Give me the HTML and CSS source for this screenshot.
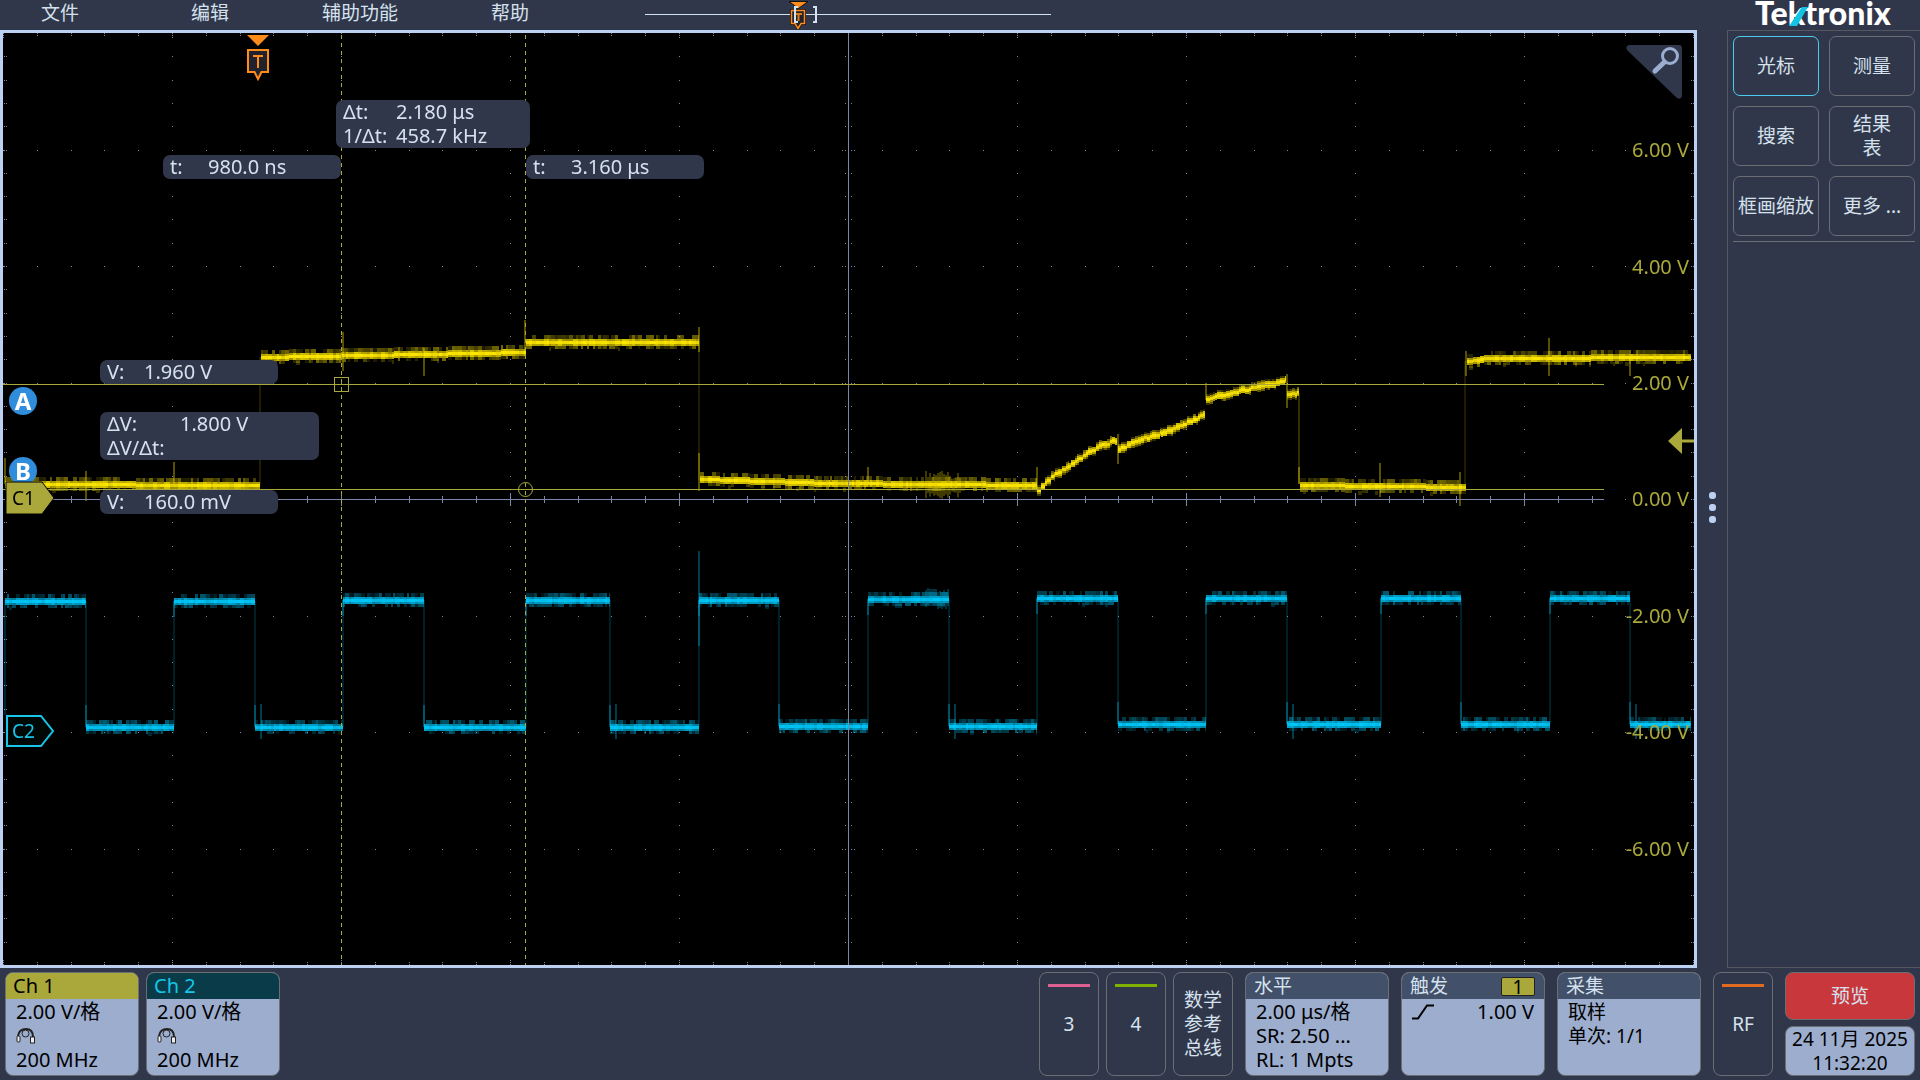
FILE: index.html
```
<!DOCTYPE html>
<html lang="zh-CN">
<head>
    <meta charset="UTF-8">
    <meta name="viewport" content="width=device-width, initial-scale=1.0">
    <title>Tektronix</title>
    <link rel="stylesheet" href="styles.css">
</head>
<body>
    <header class="topbar">
        <nav class="menu">
            <button>文件</button>
            <button>编辑</button>
            <button>辅助功能</button>
            <button>帮助</button>
        </nav>
        <svg class="overview" width="408" height="30" viewBox="644 0 408 30">
            <path d="M645 14.5H1051" stroke="#cfe3f2"/>
            <path d="M789 1.500h19l-9.500 7z" fill="#ff8c1a" stroke="#111"/>
            <path d="M791.500 10.500h13v13h-3.500l-3 5-3-5h-3.500z" fill="#22222e" stroke="#111" stroke-width="3"/>
            <path d="M791.500 10.500h13v13h-3.500l-3 5-3-5h-3.500z" fill="#22222e" stroke="#ff8c1a" stroke-width="1.500"/>
            <path d="M795 14h7M798.500 14v7" stroke="#d97a1c" stroke-width="2"/>
            <path d="M798 7h-3v15h3M813 7h3v15h-3" fill="none" stroke="#cfe3f2" stroke-width="2"/>
        </svg>
        <div class="logo">
            <svg width="144" height="30" viewBox="0 0 144 30">
                <text class="logo-text" x="4" y="25">Tektronix</text>
                <path d="M38 26l13-19h6l-11 19z" fill="#12c4e4"/>
            </svg>
        </div>
    </header>

    <main class="plot">
        <canvas id="screen" class="screen" width="1691" height="932"></canvas>

        <svg class="trigger-pos" width="24" height="48" viewBox="0 0 24 48">
            <path d="M1 1h22l-11 11z" fill="#ff8c1a"/>
            <path d="M2 16h20v22h-6.500l-3.500 7-3.500-7h-6.500z" fill="#22222e" stroke="#ff8c1a" stroke-width="2"/>
            <path d="M7 22h10M12 22v12" stroke="#ff8c1a" stroke-width="2"/>
        </svg>

        <div class="readout delta-t">
            <span>Δt:</span><span>2.180 μs</span>
            <span>1/Δt:</span><span>458.7 kHz</span>
        </div>
        <div class="readout time-a"><span>t:</span><span>980.0 ns</span></div>
        <div class="readout time-b"><span>t:</span><span>3.160 μs</span></div>
        <div class="readout volt-a"><span>V:</span><span>1.960 V</span></div>
        <div class="readout delta-v">
            <span>ΔV:</span><span>1.800 V</span>
            <span>ΔV/Δt:</span>
        </div>
        <div class="readout volt-b"><span>V:</span><span>160.0 mV</span></div>

        <div class="knob knob-a">A</div>
        <div class="knob knob-b">B</div>

        <div class="channel-tag tag-c1">
            <svg width="50" height="34" viewBox="0 0 50 34"><path d="M1 1h36l12 16-12 16H1z" fill="#aaa83a" stroke="#000"/></svg>
            <span>C1</span>
        </div>
        <div class="channel-tag tag-c2">
            <svg width="50" height="34" viewBox="0 0 50 34"><path d="M2 2h34l12 15-12 15H2z" fill="#000806" stroke="#16c6e8" stroke-width="2"/></svg>
            <span>C2</span>
        </div>

        <div class="scale">
            <span>6.00 V</span>
            <span>4.00 V</span>
            <span>2.00 V</span>
            <span>0.00 V</span>
            <span>-2.00 V</span>
            <span>-4.00 V</span>
            <span>-6.00 V</span>
        </div>

        <svg class="trigger-level" width="26" height="26" viewBox="0 0 26 26">
            <path d="M0 13L14 0v11.500h12v3H14V26z" fill="#aaa83a"/>
        </svg>

        <button class="zoom" aria-label="缩放">
            <svg width="56" height="56" viewBox="0 0 56 56">
                <path d="M3 0h50q3 0 3 3v48q-1 4-5 2L1 5q-2-4 2-5z" fill="#31374a"/>
                <circle cx="44" cy="11" r="7.500" fill="none" stroke="#9aaed2" stroke-width="3"/>
                <path d="M38.500 17L29 26" stroke="#9aaed2" stroke-width="5" stroke-linecap="round"/>
            </svg>
        </button>
    </main>

    <div class="handle"><i></i><i></i><i></i></div>

    <aside class="panel">
        <div class="panel-buttons">
            <button class="active">光标</button>
            <button>测量</button>
            <button>搜索</button>
            <button>结果<br>表</button>
            <button>框画缩放</button>
            <button>更多 ...</button>
        </div>
    </aside>

    <footer class="bottombar">
        <section class="card channel ch1">
            <h2>Ch 1</h2>
            <div class="card-body">
                <p>2.00 V/格</p>
                <p><svg class="probe" width="20" height="16" viewBox="0 0 20 16"><path d="M2 8Q3 1 10 1T17 9" fill="none" stroke="#222" stroke-width="2"/><circle cx="9.500" cy="5.500" r="3.500" fill="none" stroke="#222"/><rect x="1" y="8" width="3" height="6" rx="1" fill="#eee" stroke="#222"/><rect x="14.500" y="9" width="4" height="6" fill="#eee" stroke="#222"/></svg></p>
                <p>200 MHz</p>
            </div>
        </section>
        <section class="card channel ch2">
            <h2>Ch 2</h2>
            <div class="card-body">
                <p>2.00 V/格</p>
                <p><svg class="probe" width="20" height="16" viewBox="0 0 20 16"><path d="M2 8Q3 1 10 1T17 9" fill="none" stroke="#222" stroke-width="2"/><circle cx="9.500" cy="5.500" r="3.500" fill="none" stroke="#222"/><rect x="1" y="8" width="3" height="6" rx="1" fill="#eee" stroke="#222"/><rect x="14.500" y="9" width="4" height="6" fill="#eee" stroke="#222"/></svg></p>
                <p>200 MHz</p>
            </div>
        </section>

        <div class="inactive">
            <button class="slot pink">3</button>
            <button class="slot green">4</button>
            <button class="slot">数学<br>参考<br>总线</button>
        </div>

        <section class="card wide">
            <h2>水平</h2>
            <div class="card-body">
                <p>2.00 μs/格</p>
                <p>SR: 2.50 ...</p>
                <p>RL: 1 Mpts</p>
            </div>
        </section>
        <section class="card wide">
            <h2>触发 <span class="source">1</span></h2>
            <div class="card-body">
                <p class="trigger-row">
                    <svg width="22" height="16" viewBox="0 0 22 16"><path d="M0 14.500h6L15 1.500h7" fill="none" stroke="#000" stroke-width="2"/></svg>
                    <span>1.00 V</span>
                </p>
            </div>
        </section>
        <section class="card wide">
            <h2>采集</h2>
            <div class="card-body">
                <p class="cjk">取样</p>
                <p class="cjk">单次: 1/1</p>
            </div>
        </section>
        <button class="slot orange">RF</button>
        <div class="status">
            <button class="preview">预览</button>
            <time class="clock">24 11月 2025<br>11:32:20</time>
        </div>
    </footer>

    <script src="scope.js"></script>
</body>
</html>
```
FILE: styles.css
```
* {
    box-sizing: border-box;
}

body {
    margin: 0;
    height: 100vh;
    display: grid;
    grid-template-columns: 1fr 30px 193px;
    grid-template-rows: 30px 1fr 112px;
    background-color: #31374a;
    color: #d5e2ee;
    font-family: "Noto Sans", "Noto Sans CJK SC", sans-serif;
    font-size: 20px;
    line-height: 24px;
    overflow: hidden;
}

button {
    padding: 0;
    border: none;
    background: none;
    color: inherit;
    font-family: inherit;
    font-size: 19px;
    line-height: 24px;
    cursor: pointer;
}

/* top bar */
.topbar {
    grid-column: 1 / -1;
    display: flex;
}

.menu {
    display: grid;
    grid-template-columns: repeat(4, 120px);
    gap: 30px;
    margin-right: 74px;
    padding-bottom: 5px;
}

.logo {
    width: 193px;
    margin-left: auto;
    padding-left: 24px;
}

.logo-text {
    font-family: Lato, sans-serif;
    font-size: 32px;
    font-weight: 900;
    fill: #fff;
}

/* waveform view */
.plot {
    position: relative;
    border: 3px solid #bcd0f2;
    background-color: #000;
    min-height: 0;
}

.screen {
    display: block;
    width: 100%;
    height: 100%;
}

.readout {
    position: absolute;
    display: grid;
    align-content: start;
    padding-left: 7px;
    border-radius: 7px;
    background-color: #31374a;
    white-space: nowrap;
}

.delta-t {
    left: 333px;
    top: 67px;
    width: 194px;
    grid-template-columns: 53px 1fr;
}

.time-a, .time-b {
    top: 122px;
    width: 178px;
    grid-template-columns: 38px 1fr;
}

.time-a {
    left: 160px;
}

.time-b {
    left: 523px;
}

.volt-a, .volt-b {
    left: 97px;
    width: 178px;
    grid-template-columns: 37px 1fr;
}

.volt-a {
    top: 327px;
}

.volt-b {
    top: 457px;
}

.delta-v {
    left: 97px;
    top: 379px;
    width: 219px;
    grid-template-columns: 73px 1fr;
}

.knob {
    position: absolute;
    left: 6px;
    width: 28px;
    height: 28px;
    border-radius: 50%;
    background-color: #2f8ddb;
    color: #fff;
    font-size: 24px;
    font-weight: bold;
    line-height: 28px;
    text-align: center;
}

.knob-a {
    top: 354px;
}

.knob-b {
    top: 424px;
}

.channel-tag {
    position: absolute;
    left: 2px;
    width: 50px;
    height: 34px;
}

.channel-tag svg {
    position: absolute;
    left: 0;
    top: 0;
}

.channel-tag span {
    position: relative;
    display: block;
    padding-left: 7px;
    font-size: 19px;
    line-height: 34px;
}

.tag-c1 {
    top: 448px;
    color: #000;
}

.tag-c2 {
    top: 681px;
    color: #16c6e8;
}

/* one label per division, centred on its grid line */
.scale {
    position: absolute;
    top: 0;
    bottom: 0;
    right: 5px;
    padding: 59px 0 58px;
    display: flex;
    flex-direction: column;
    color: #aaa83a;
    text-align: right;
}

.scale span {
    flex: 1;
    display: flex;
    align-items: center;
    justify-content: flex-end;
}

.trigger-pos {
    position: absolute;
    left: 243px;
    top: 1px;
}

.trigger-level {
    position: absolute;
    right: 0;
    top: 395px;
}

.zoom {
    position: absolute;
    right: 12px;
    top: 12px;
    width: 56px;
    height: 56px;
}

.zoom svg {
    display: block;
}

.handle {
    display: flex;
    flex-direction: column;
    align-items: center;
    justify-content: center;
    gap: 5px;
    padding-top: 16px;
}

.handle i {
    width: 7px;
    height: 7px;
    border-radius: 3px;
    background-color: #bcd0f2;
}

/* side panel */
.panel {
    padding: 5px 5px 0;
    border: 1px solid #55585f;
    border-right: none;
}

.panel-buttons {
    display: grid;
    grid-template-columns: 1fr 1fr;
    grid-auto-rows: 60px;
    gap: 10px;
    padding-bottom: 5px;
    border-bottom: 1px solid #6b6e72;
}

.panel-buttons button {
    border: 1px solid #6b6e72;
    border-radius: 7px;
}

.panel-buttons .active {
    border-color: #4ccbee;
}

/* bottom bar */
.bottombar {
    grid-column: 1 / -1;
    display: flex;
    gap: 12px;
    padding: 4px 5px;
}

.card {
    border: 1px solid #6b6e72;
    border-radius: 8px;
    overflow: hidden;
    background-color: #9cadce;
    color: #000;
}

.card h2 {
    display: flex;
    justify-content: space-between;
    align-items: center;
    margin: 0;
    height: 26px;
    padding: 0 9px 0 8px;
    background-color: #425069;
    color: #d5e2ee;
    font-size: 19px;
    font-weight: normal;
}

.card p {
    margin: 0;
    height: 24px;
}

.card-body {
    padding: 1px 10px 0;
    white-space: nowrap;
}

.channel {
    width: 134px;
}

.channel + .channel {
    margin-left: -5px;
}

.card.channel h2 {
    padding-left: 7px;
    font-size: 20px;
}

.card.ch1 h2 {
    background-color: #aaa83a;
    color: #000;
}

.card.ch2 h2 {
    background-color: #0a3b48;
    color: #16c6e8;
}

.probe {
    display: block;
    padding-top: 4px;
    height: 20px;
}

.wide {
    width: 144px;
}

.cjk {
    font-size: 19px;
}

.source {
    width: 34px;
    height: 19px;
    border: 1px solid #222;
    border-radius: 2px;
    background-color: #aaa83a;
    color: #000;
    line-height: 18px;
    text-align: center;
}

.trigger-row {
    display: flex;
    justify-content: space-between;
    align-items: center;
}

.inactive {
    display: flex;
    gap: 7px;
    margin-left: auto;
}

.slot {
    position: relative;
    width: 60px;
    border: 1px solid #6b6e72;
    border-radius: 8px;
}

.pink::before, .green::before, .orange::before {
    content: "";
    position: absolute;
    left: 8px;
    right: 8px;
    top: 11px;
    height: 3px;
}

.pink::before {
    background-color: #dd6090;
}

.green::before {
    background-color: #80b000;
}

.orange::before {
    background-color: #e06a20;
}

.status {
    width: 130px;
    display: flex;
    flex-direction: column;
    gap: 6px;
}

.preview, .clock {
    flex: 1;
    border: 1px solid #6b6e72;
    border-radius: 8px;
}

.preview {
    background-color: #c7373b;
}

.clock {
    background-color: #9cadce;
    color: #000;
    font-size: 19px;
    line-height: 24px;
    text-align: center;
    white-space: nowrap;
}
```
FILE: scope.js
```
const canvas = document.getElementById('screen');
const ctx = canvas.getContext('2d');

// work in window coordinates, the screen starts at 3,33
ctx.translate(-3, -33);

const CENTER_X = 848, ZERO_Y = 499;
const DIV_X = 169, DIV_Y = 116.5;
const GRID = '#7c86a8', CURSOR = '#a9a83b';
const YELLOW = '255,232,0', CYAN = '0,200,250';

// small seeded generator so the noise is the same on each load
let seed = 7;
function rnd() {
    seed = (seed * 16807) % 2147483647;
    return seed / 2147483647;
}

function box(color, x, y, w, h) {
    ctx.fillStyle = color;
    ctx.fillRect(Math.round(x), Math.round(y), w, h);
}

function drawGrid() {
    for (let i = -25; i <= 25; i++) {
        const x = CENTER_X + i * DIV_X / 5;
        const major = i % 5 === 0;
        for (let j = -3; j <= 3; j++) {
            box(GRID, x, ZERO_Y + j * DIV_Y, 1, 1);
        }
        const len = major ? 3 : 2;
        for (let k = 0; k < len; k++) {
            box(GRID, x, 33 + k * 2, 1, 1);
            box(GRID, x, 964 - k * 2, 1, 1);
        }
        if (x > 52 && x < 1604) {
            box(GRID, x, ZERO_Y - (major ? 6 : 3), 1, major ? 13 : 7);
        }
    }
    for (let j = -19; j <= 19; j++) {
        const y = ZERO_Y + j * DIV_Y / 5;
        for (let i = -4; i <= 4; i++) {
            box(GRID, CENTER_X + i * DIV_X, y, 1, 1);
        }
        box(GRID, 4, y, 1, 1);
        box(GRID, 6, y, 1, 1);
        box(GRID, 1691, y, 1, 1);
        box(GRID, 1693, y, 1, 1);
        const half = j % 5 === 0 ? 6 : 3;
        for (let k = -half; k <= half; k += 3) {
            box(GRID, CENTER_X + k, y, 1, 1);
        }
    }
}

function drawAxes() {
    box(GRID, CENTER_X, 33, 1, 932);
    box(GRID, 52, ZERO_Y, 1552, 1);
}

// noisy band along a straight piece of the trace
function segment(rgb, x0, y0, x1, y1, stepped) {
    let x = x0;
    while (x < x1) {
        const w = Math.min(2 + Math.floor(rnd() * 3), x1 - x);
        let y = y0 + (y1 - y0) * (x - x0) / (x1 - x0);
        if (stepped) {
            y += rnd() * 2 - 1;
        }
        box(`rgba(${rgb},${0.6 + rnd() * 0.25})`, x, y - 3, w, 7);
        box(`rgba(${rgb},${0.7 + rnd() * 0.3})`, x, y - 1, w, 3);
        if (rnd() < 0.75) {
            box(`rgba(${rgb},${0.1 + rnd() * 0.35})`, x, y - (stepped ? 5 : 7), w, stepped ? 2 : 4);
        }
        if (rnd() < 0.6) {
            box(`rgba(${rgb},${0.1 + rnd() * 0.35})`, x, y + 4, w, stepped ? 2 : 3);
        }
        if (!stepped && rnd() < 0.04) {
            box(`rgba(${rgb},0.2)`, x, y + 5, w, 4);
        }
        x += w;
    }
}

function edge(rgb, x, y0, y1, alpha) {
    box(`rgba(${rgb},${alpha})`, x - 1, Math.min(y0, y1), 2, Math.abs(y1 - y0));
}

function drawCh1() {
    const flat = [
        [5, 484, 260, 485], [261, 357, 526, 352], [526, 342, 699, 342],
        [700, 479, 830, 483], [830, 483, 1037, 485],
        [1300, 485, 1466, 487], [1467, 361, 1487, 358], [1487, 358, 1691, 357]
    ];
    const ramp = [
        [1037, 489, 1055, 473], [1055, 473, 1069, 465], [1069, 465, 1083, 455],
        [1083, 455, 1096, 447], [1096, 447, 1117, 439], [1118, 449, 1138, 440],
        [1138, 440, 1161, 433], [1161, 433, 1184, 423], [1184, 423, 1205, 414],
        [1206, 399, 1239, 390], [1239, 390, 1266, 385], [1266, 385, 1286, 380],
        [1287, 394, 1299, 393]
    ];
    flat.forEach(s => segment(YELLOW, ...s, false));
    ramp.forEach(s => segment(YELLOW, ...s, true));

    edge(YELLOW, 260, 357, 484, 0.12);
    edge(YELLOW, 699, 342, 480, 0.12);
    edge(YELLOW, 1299, 393, 484, 0.2);
    edge(YELLOW, 1465, 361, 487, 0.12);

    const spikes = [
        [5, 458, 484], [86, 471, 501], [174, 462, 484], [343, 332, 371],
        [424, 348, 376], [525, 320, 356], [699, 327, 352], [699, 453, 491],
        [868, 467, 484], [1037, 467, 490], [1118, 434, 464], [1206, 383, 400],
        [1287, 374, 408], [1299, 467, 484], [1380, 463, 497], [1460, 472, 506],
        [1466, 351, 376], [1549, 338, 376], [1630, 358, 376]
    ];
    spikes.forEach(s => edge(YELLOW, ...s, 0.35));

    for (let x = 925; x < 961; x += 2) {
        const h = 12 + rnd() * 16;
        box(`rgba(${YELLOW},0.25)`, x, 485 - h / 2, 2, h);
    }
}

function drawCh2() {
    // start x and level of each half period
    const levels = [
        [5, 601], [86, 727], [174, 601], [255, 727], [343, 600], [424, 727],
        [526, 600], [610, 727], [699, 600], [779, 726], [868, 599], [949, 726],
        [1037, 598], [1118, 724], [1206, 598], [1287, 724], [1381, 598],
        [1461, 724], [1550, 598], [1630, 724], [1691, 724]
    ];
    for (let i = 0; i < levels.length - 1; i++) {
        const [x, y] = levels[i];
        const [end, next] = levels[i + 1];
        segment(CYAN, x, y, end, y, false);
        if (end < 1691) {
            edge(CYAN, end, y, next, 0.16);
            edge(CYAN, end, next, next > y ? next - 22 : next + 16, 0.3);
        }
        if (y > 700 && i % 4 === 3) {
            edge(CYAN, x + 6, 704, 739, 0.3);
        }
    }
    edge(CYAN, 5, 600, 715, 0.18);
    edge(CYAN, 699, 551, 646, 0.3);
    for (let x = 925; x < 948; x += 2) {
        box(`rgba(${CYAN},0.25)`, x, 588 + rnd() * 4, 2, 17);
    }
}

function drawCursors() {
    ctx.strokeStyle = CURSOR;
    ctx.lineWidth = 1;
    ctx.setLineDash([4, 4]);
    [341.5, 525.5].forEach(x => {
        ctx.beginPath();
        ctx.moveTo(x, 35);
        ctx.lineTo(x, 965);
        ctx.stroke();
    });
    ctx.setLineDash([]);
    box(CURSOR, 3, 384, 1601, 1);
    box(CURSOR, 3, 489, 1601, 1);
    ctx.strokeRect(334.5, 377.5, 14, 14);
    ctx.beginPath();
    ctx.arc(525.5, 489.5, 7, 0, Math.PI * 2);
    ctx.stroke();
}

drawGrid();
drawCh1();
drawCh2();
drawAxes();
drawCursors();
```
